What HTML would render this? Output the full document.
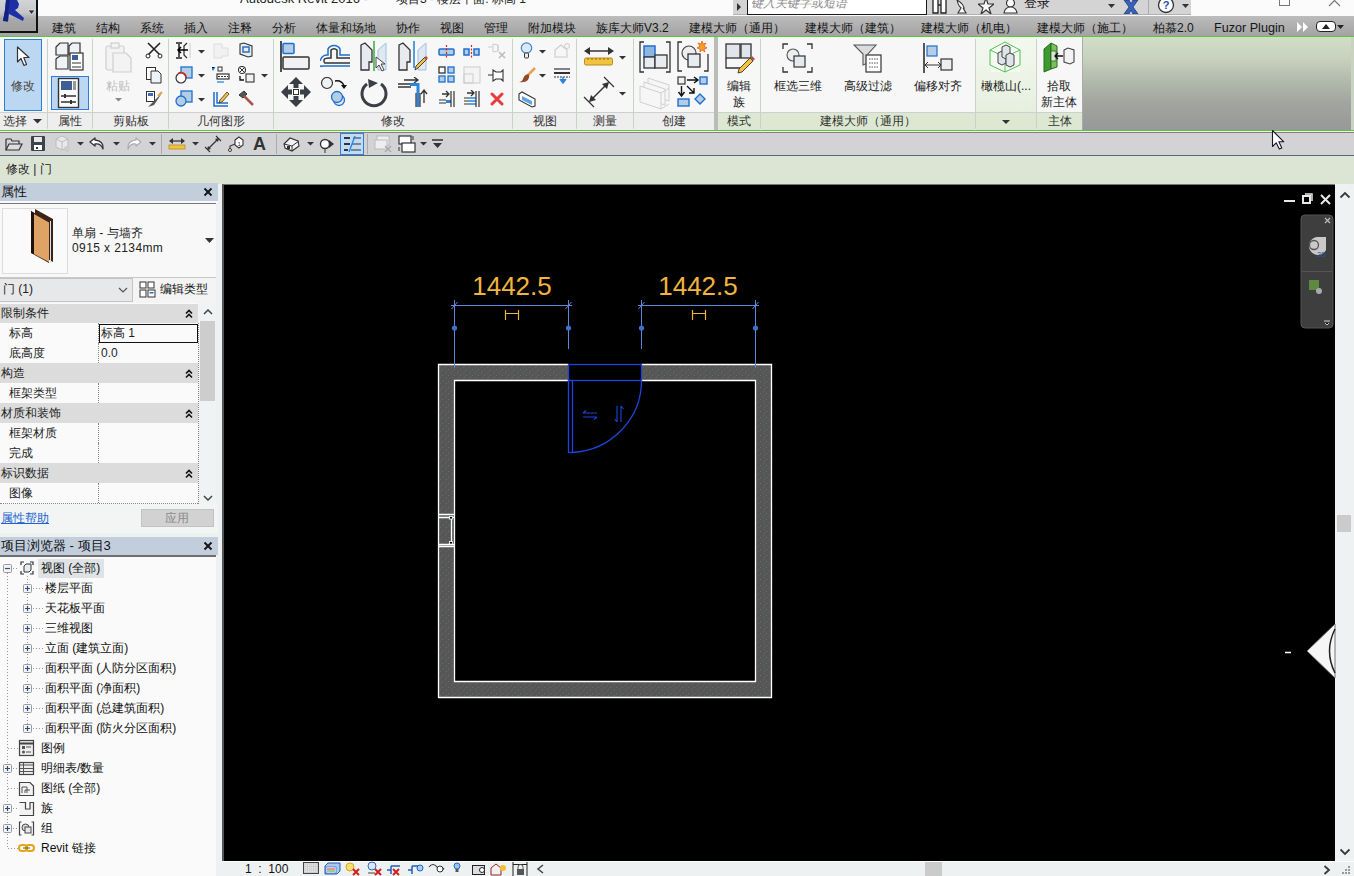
<!DOCTYPE html>
<html><head><meta charset="utf-8">
<style>
*{box-sizing:border-box;margin:0;padding:0}
html,body{width:1354px;height:876px;overflow:hidden;background:#000;font-family:"Liberation Sans",sans-serif;font-size:12px;color:#1e1e1e}
div,span,svg{position:absolute}
.t{white-space:nowrap;line-height:14px;font-size:12px}
#title{left:0;top:0;width:1354px;height:16px;background:#fbfbfb;overflow:hidden}
#tabs{left:0;top:16px;width:1354px;height:20px;background:linear-gradient(#bcbcbc,#a3a3a3)}
#logo{left:0;top:0;width:38px;height:33px;background:linear-gradient(#d2d5d8,#c4c6c8 40%,#a9a9a9 60%,#a2a0a2);border-right:2px solid #111;border-bottom:2px solid #111}
.tab{top:21px;color:#151515}
#greenl{left:0;top:36px;width:1354px;height:1px;background:#58c934}
#ribbon{left:0;top:37px;width:1083px;height:93px;background:#f7f7f7}
#ribbonR{left:1083px;top:37px;width:271px;height:93px;background:linear-gradient(#d2ddc8 0%,#c8d3bf 22%,#b4bcad 45%,#a2a5a0 70%,#979898 100%);border-right:3px solid #c9d3c2}
.sep{top:39px;width:1px;height:90px;background:#c9d2c6}
.plab{top:112px;height:18px;background:#eeeeee;color:#333;text-align:center;line-height:17px;border-top:1px solid #cfcfcf}
.glab{background:#dde8d2}
#greenl2{left:0;top:130px;width:1354px;height:1px;background:#58c934}
#qat{left:0;top:131px;width:1354px;height:25px;background:#d3d3d6;border-top:1px solid #f2f2f2;border-bottom:1px solid #5c6673;box-shadow:inset 0 1px 0 #8a7a8a}
#opt{left:0;top:156px;width:1354px;height:28px;background:#dce5d3}
#canvas{left:222px;top:184px;width:1113px;height:677px;background:#000;border-left:2px solid #555;border-top:1px solid #777}
#props{left:0;top:184px;width:218px;height:349px;background:#f4f4f4}
#browser{left:0;top:533px;width:216px;height:343px;background:#fafafa}
#lsplit{left:216px;top:184px;width:6px;height:692px;background:#eef1f2}
#vscroll{left:1335px;top:184px;width:19px;height:677px;background:#eef2f2}
#status{left:222px;top:861px;width:1132px;height:15px;background:#eef1f1;border-top:1px solid #fff}
.hdr{left:0;height:18px;background:#c3cedd;width:218px}
.sec{left:0;width:198px;height:20px;background:#dcdcdc}
.row{left:0;width:198px;height:21px;background:#fafafa;border-bottom:1px dotted #888}
.dv{left:98px;top:0;width:1px;height:20px;border-left:1px dotted #888}
.chev{font-size:11px;color:#222}
.bi{left:0;color:#111}
</style></head><body>
<div id="title">
  <div class="t" style="left:240px;top:-8px;font-size:13px;color:#222">Autodesk Revit 2016 -</div><div class="t" style="left:396px;top:-8px;font-size:12px;color:#222">项目3 - 楼层平面: 标高 1</div>
</div>
<!--TB--><div style="left:733px;top:0;width:458px;height:15px;background:#d4d4d4;border-bottom:1px solid #b0b0b0"></div>
<svg style="left:735px;top:2px" width="8" height="10" viewBox="0 0 8 10"><path d="M2 1 L6 5 L2 9Z" fill="#333"/></svg>
<div style="left:747px;top:-2px;width:180px;height:17px;background:#fff;border:1px solid #1a1a1a"></div>
<div class="t" style="left:751px;top:-4px;color:#8a8a8a;font-style:italic">键入关键字或短语</div>
<svg style="left:931px;top:0" width="17" height="14" viewBox="0 0 17 14"><path d="M2 0 V13 H7 V0 M10 0 V13 H15 V0 M7 5 H10" stroke="#222" fill="#fff" stroke-width="1.3"/></svg>
<svg style="left:955px;top:0" width="14" height="14" viewBox="0 0 14 14"><path d="M2 0 Q9 4 9 9 Q4 9 2 0Z" fill="#fff" stroke="#333" stroke-width="1.1"/><path d="M6 8 L3 13 H11 L8 8" fill="#fff" stroke="#333" stroke-width="1.1"/></svg>
<svg style="left:978px;top:0" width="16" height="14" viewBox="0 0 16 14"><path d="M8 -2 L10 4 L16 4 L11 8 L13 14 L8 10 L3 14 L5 8 L0 4 L6 4Z" fill="#fff" stroke="#333" stroke-width="1.2"/></svg>
<svg style="left:1003px;top:0" width="15" height="14" viewBox="0 0 15 14"><circle cx="7.5" cy="3" r="4" fill="#fff" stroke="#333" stroke-width="1.2"/><path d="M1 13 Q2 7 7.5 7 Q13 7 14 13Z" fill="#fff" stroke="#333" stroke-width="1.2"/></svg>
<div class="t" style="left:1024px;top:-4px;font-size:13px;color:#111">登录</div>
<svg style="left:1108px;top:4px" width="7" height="5" viewBox="0 0 7 5"><path d="M0 0 H7 L3.5 4Z" fill="#333"/></svg>
<svg style="left:1123px;top:0" width="16" height="14" viewBox="0 0 16 14"><path d="M1 0 H6 L8 4 L10 0 H15 L10 7 L15 14 H10 L8 10 L6 14 H1 L6 7Z" fill="#3a62b8" stroke="#1c3a80" stroke-width="0.8"/></svg>
<div style="left:1148px;top:0;width:1px;height:14px;background:#aaa"></div>
<svg style="left:1157px;top:-3px" width="18" height="17" viewBox="0 0 18 17"><circle cx="9" cy="8" r="7.5" fill="#fff" stroke="#333" stroke-width="1.3"/><text x="9" y="12" font-family="Liberation Sans" font-weight="bold" font-size="11" fill="#1a50b0" text-anchor="middle">?</text></svg>
<svg style="left:1182px;top:4px" width="7" height="5" viewBox="0 0 7 5"><path d="M0 0 H7 L3.5 4Z" fill="#333"/></svg>
<div style="left:1279px;top:-2px;width:11px;height:8px;border:1px solid #777"></div>
<svg style="left:1328px;top:0" width="14" height="8" viewBox="0 0 14 8"><path d="M1 -5 L12 6 M12 -5 L1 6" stroke="#777" stroke-width="1.2"/></svg>
<!--/TB-->
<div id="tabs"></div>
<div id="logo"></div>
<svg style="left:0;top:0" width="37" height="32" viewBox="0 0 37 32"><path d="M6 0 H17 L19 4 L18 8 L15 10 L24 18 L23 21 L9 14 L8 21.5 L3 21 L5 10Z" fill="#1d30a6"/><path d="M6 0 H10 L8 14 L8 21.5 L3 21 L5 10Z" fill="#152380"/><path d="M28 10 H35 L31.5 14.5Z" fill="#2a2e34" stroke="#fff" stroke-width="0.6"/></svg>
<div class="t tab" style="left:52px">建筑</div>
<div class="t tab" style="left:96px">结构</div>
<div class="t tab" style="left:140px">系统</div>
<div class="t tab" style="left:184px">插入</div>
<div class="t tab" style="left:228px">注释</div>
<div class="t tab" style="left:272px">分析</div>
<div class="t tab" style="left:316px">体量和场地</div>
<div class="t tab" style="left:396px">协作</div>
<div class="t tab" style="left:440px">视图</div>
<div class="t tab" style="left:484px">管理</div>
<div class="t tab" style="left:528px">附加模块</div>
<div class="t tab" style="left:596px">族库大师V3.2</div>
<div class="t tab" style="left:689px">建模大师（通用）</div>
<div class="t tab" style="left:805px">建模大师（建筑）</div>
<div class="t tab" style="left:921px">建模大师（机电）</div>
<div class="t tab" style="left:1037px">建模大师（施工）</div>
<div class="t tab" style="left:1153px">柏慕2.0</div>
<div class="t tab" style="left:1214px;font-size:12.6px">Fuzor Plugin</div>
<!--TABSX--><svg style="left:1297px;top:22px" width="12" height="10" viewBox="0 0 12 10"><path d="M0 0 L5 5 L0 10Z M6 0 L11 5 L6 10Z" fill="#fff"/></svg>
<div style="left:1316px;top:21px;width:20px;height:11px;border:1.5px solid #222;border-radius:4px;background:#fff"></div>
<svg style="left:1322px;top:24px" width="8" height="5" viewBox="0 0 8 5"><path d="M0 5 L4 0 L8 5Z" fill="#222"/></svg>
<svg style="left:1337px;top:25px" width="7" height="4" viewBox="0 0 7 4"><path d="M0 0 H7 L3.5 4Z" fill="#222"/></svg>
<!--/TABSX-->
<div id="greenl"></div>
<div id="ribbon"></div>
<div id="ribbonR"></div>
<div id="greenl2"></div>
<div id="qat"></div>
<div id="opt"></div>
<div class="t" style="left:6px;top:162px;color:#222">修改 | 门</div>
<div id="props"></div>
<div id="browser"></div>
<div id="lsplit"></div>
<div id="canvas"></div>
<div id="vscroll"></div>
<div id="status"></div>
<!--RIBBON--><!-- separators -->
<div class="sep" style="left:47px"></div>
<div class="sep" style="left:92px"></div>
<div class="sep" style="left:168px"></div>
<div class="sep" style="left:273px"></div>
<div class="sep" style="left:512px"></div>
<div class="sep" style="left:576px"></div>
<div class="sep" style="left:633px"></div>
<div style="left:714px;top:37px;width:4px;height:93px;background:#b9bcb8"></div>
<div class="sep" style="left:760px"></div>
<div class="sep" style="left:975px"></div>
<div style="left:976px;top:37px;width:60px;height:93px;background:linear-gradient(#f3f8ef,#e4eedb)"></div>
<div class="sep" style="left:1036px"></div>
<div style="left:1082px;top:37px;width:1px;height:93px;background:#aaa"></div>
<!-- panel labels -->
<div class="t plab" style="left:0;width:47px;text-align:left;padding-left:3px">选择</div><svg style="left:33px;top:119px" width="9" height="5" viewBox="0 0 9 5"><path d="M0 0 H9 L4.5 4.5Z" fill="#333"/></svg>
<div class="t plab" style="left:48px;width:44px">属性</div>
<div class="t plab" style="left:93px;width:75px">剪贴板</div>
<div class="t plab" style="left:169px;width:104px">几何图形</div>
<div class="t plab" style="left:274px;width:238px">修改</div>
<div class="t plab" style="left:513px;width:63px">视图</div>
<div class="t plab" style="left:577px;width:56px">测量</div>
<div class="t plab" style="left:634px;width:80px">创建</div>
<div class="t plab glab" style="left:718px;width:42px">模式</div>
<div class="t plab glab" style="left:761px;width:214px">建模大师（通用）</div>
<div class="t plab glab" style="left:976px;width:60px"></div><svg style="left:1002px;top:120px" width="8" height="5" viewBox="0 0 8 5"><path d="M0 0 H8 L4 4Z" fill="#333"/></svg>
<div class="t plab glab" style="left:1037px;width:45px">主体</div>
<!-- 选择: modify button -->
<div style="left:4px;top:39px;width:38px;height:72px;background:#bcd7f1;border:1px solid #2d7fd8"></div>
<svg style="left:16px;top:46px" width="16" height="22" viewBox="0 0 16 22"><path d="M1.5 1 L1.5 16 L5 12.5 L8 19.5 L10.5 18.5 L7.8 11.5 L13 11.5 Z" fill="#fff" stroke="#333" stroke-width="1.2" stroke-linejoin="round"/></svg>
<div class="t" style="left:11px;top:79px;color:#444">修改</div>
<!-- 属性 -->
<svg style="left:54px;top:41px" width="32" height="32" viewBox="0 0 32 32"><g fill="#eef2f5" stroke="#333" stroke-width="1.2"><path d="M3 5 L6 2 L14 2 L14 14 L2 14 L2 6Z"/><path d="M15 5 L18 2 L26 2 L26 14 L15 14Z"/><path d="M3 17 L6 15 L14 15 L14 28 L2 28 L2 18Z"/></g><rect x="16" y="12" width="13" height="17" fill="#fff" stroke="#333" stroke-width="1.2"/><rect x="18" y="14" width="6" height="5" fill="#3b5f9a"/><path d="M18 22 H27 M18 26 H27" stroke="#333"/></svg>
<div style="left:51px;top:76px;width:38px;height:34px;background:#bcd7f1;border:1px solid #2d7fd8"></div>
<svg style="left:57px;top:77px" width="24" height="32" viewBox="0 0 24 32"><rect x="1.5" y="1.5" width="20" height="29" fill="#fafafa" stroke="#333" stroke-width="1.4"/><rect x="4" y="4" width="11" height="9" fill="#3c5f96"/><rect x="16" y="4" width="3" height="9" fill="#999"/><path d="M4 19 H19 M4 25 H19" stroke="#333" stroke-width="1.3"/><path d="M8 17 V21 M14 23 V27" stroke="#333" stroke-width="2"/></svg>
<!-- 剪贴板 -->
<svg style="left:104px;top:42px" width="30" height="32" viewBox="0 0 30 32"><g fill="#f3f3f3" stroke="#cfcfcf" stroke-width="1.2"><rect x="2" y="4" width="18" height="24" rx="2"/><rect x="7" y="1" width="8" height="5"/><path d="M9 11 H22 L27 16 V30 H9Z"/></g></svg>
<div class="t" style="left:106px;top:79px;color:#bdbdbd">粘贴</div>
<svg style="left:115px;top:98px" width="7" height="4" viewBox="0 0 7 4"><path d="M0 0 H7 L3.5 3.5Z" fill="#888"/></svg>
<svg style="left:145px;top:41px" width="18" height="18" viewBox="0 0 18 18"><path d="M3 2 L15 14 M15 2 L3 14" stroke="#222" stroke-width="1.6"/><circle cx="3" cy="15" r="2" fill="#fff" stroke="#222"/><circle cx="15" cy="15" r="2" fill="#fff" stroke="#222"/></svg>
<svg style="left:145px;top:66px" width="18" height="18" viewBox="0 0 18 18"><rect x="1.5" y="1.5" width="9" height="12" fill="#fff" stroke="#333"/><path d="M6 5 H13 L16 8 V17 H6Z" fill="#eef3f7" stroke="#333"/></svg>
<svg style="left:145px;top:90px" width="18" height="18" viewBox="0 0 18 18"><rect x="1.5" y="1.5" width="8" height="10" fill="#fff" stroke="#333"/><rect x="3" y="3" width="5" height="3" fill="#3b6ac4"/><path d="M17 3 L8 12 L3 17 L9 15Z" fill="#555"/><path d="M17 2 L13 6" stroke="#e4a050" stroke-width="2"/></svg>
<!-- 几何图形 -->
<svg style="left:175px;top:42px" width="20" height="18" viewBox="0 0 20 18"><path d="M1 1 H7 M1 16 H7 M4 1 V16" stroke="#555" stroke-width="2"/><path d="M12 1 L9 4 V13 L12 16" stroke="#333" fill="none" stroke-width="1.3"/><path d="M15 1 V16" stroke="#ccc"/><path d="M13 8 H3 M6 5 L3 8 L6 11" stroke="#000" fill="none" stroke-width="1.5"/></svg>
<svg style="left:198px;top:50px" width="7" height="4" viewBox="0 0 7 4"><path d="M0 0 H7 L3.5 3.5Z" fill="#333"/></svg>
<svg style="left:212px;top:43px" width="18" height="16" viewBox="0 0 18 16"><path d="M2 1 H10 L10 5 H16 V13 H10 V15 H2Z" fill="#f1f1f1" stroke="#ddd"/></svg>
<svg style="left:238px;top:42px" width="16" height="16" viewBox="0 0 16 16"><path d="M2 2 L6 1 L14 4 V14 L10 15 L2 12Z" fill="#e8ecef" stroke="#333" stroke-width="1.1"/><rect x="5" y="5" width="6" height="5" fill="none" stroke="#2a6fc9" stroke-width="1.5"/></svg>
<svg style="left:175px;top:66px" width="18" height="18" viewBox="0 0 18 18"><rect x="6" y="1" width="11" height="11" fill="#b5cde4" stroke="#1e6fd0" stroke-width="1.3"/><circle cx="6" cy="12" r="5" fill="#fff" stroke="#333" stroke-width="1.2"/><path d="M3 7.5 A5 5 0 0 1 11 12" stroke="#e02020" fill="none" stroke-width="1.3"/></svg>
<svg style="left:198px;top:74px" width="7" height="4" viewBox="0 0 7 4"><path d="M0 0 H7 L3.5 3.5Z" fill="#333"/></svg>
<svg style="left:212px;top:66px" width="18" height="18" viewBox="0 0 18 18"><path d="M1 5 V2 M3 1 L1 4 L-1 1" stroke="#2a85e0" stroke-width="1.2"/><rect x="6" y="1" width="4" height="4" fill="none" stroke="#333"/><rect x="5" y="8" width="12" height="5" fill="#fff" stroke="#333" stroke-width="1.2"/><path d="M6 10.5 H16" stroke="#333" stroke-dasharray="2 1"/><path d="M5 16 H12" stroke="#2a85e0" stroke-width="1.3"/></svg>
<svg style="left:237px;top:66px" width="20" height="18" viewBox="0 0 20 18"><circle cx="5" cy="4" r="3.5" fill="#fff" stroke="#333" stroke-width="1.1"/><path d="M3 2 L7 6 M7 2 L3 6" stroke="#333"/><path d="M3 10 V14 H7" stroke="#111" fill="none" stroke-width="1.3"/><rect x="9" y="8" width="8" height="8" fill="#eef2f5" stroke="#333" stroke-width="1.1"/></svg>
<svg style="left:261px;top:74px" width="7" height="4" viewBox="0 0 7 4"><path d="M0 0 H7 L3.5 3.5Z" fill="#333"/></svg>
<svg style="left:175px;top:90px" width="18" height="18" viewBox="0 0 18 18"><rect x="6" y="1" width="11" height="11" fill="#b5cde4" stroke="#1e6fd0" stroke-width="1.3"/><circle cx="6" cy="11" r="5" fill="#b5cde4" stroke="#1e6fd0" stroke-width="1.3"/></svg>
<svg style="left:198px;top:98px" width="7" height="4" viewBox="0 0 7 4"><path d="M0 0 H7 L3.5 3.5Z" fill="#333"/></svg>
<svg style="left:212px;top:90px" width="18" height="18" viewBox="0 0 18 18"><path d="M2 2 V16 H16 M5 2 V13 H16" stroke="#1e6fd0" fill="none" stroke-width="1.5"/><path d="M8 10 L15 2 L17 4 L10 12 L7 13Z" fill="#f5c23b" stroke="#333" stroke-width="0.8"/></svg>
<svg style="left:237px;top:90px" width="18" height="18" viewBox="0 0 18 18"><path d="M2 5 L7 1 L10 4 L6 8Z" fill="#555" stroke="#333"/><path d="M7 6 L16 15" stroke="#a8574a" stroke-width="2.5"/></svg>
<!-- 修改 panel -->
<svg style="left:280px;top:40px" width="32" height="33" viewBox="0 0 32 33"><path d="M1 1 V32" stroke="#222" stroke-width="1.6"/><rect x="3" y="3.5" width="11" height="10" rx="1" fill="#b5cde4" stroke="#1e6fd0" stroke-width="1.5"/><rect x="3" y="17" width="26" height="12" rx="1" fill="#f1f1f3" stroke="#333" stroke-width="1.5"/></svg>
<svg style="left:320px;top:43px" width="31" height="26" viewBox="0 0 31 26"><path d="M30 23 H3 A3 3 0 0 1 0.5 17 A7 7 0 0 1 8 12 V6 A7 7 0 0 1 20 6 V12 H30" stroke="#1e6fd0" fill="none" stroke-width="1.5"/><path d="M30 20 H5 Q4 20 4 17 Q4 15 10 15 H11 V7 A4 4 0 0 1 17 7 V15 H30" stroke="#333" fill="none" stroke-width="1.5"/></svg>
<svg style="left:359px;top:40px" width="30" height="32" viewBox="0 0 30 32"><path d="M2 5 L6 3 L13 10 V22 H10 V30 H2Z" fill="#e7eaee" stroke="#333" stroke-width="1.3"/><path d="M15 1 V31" stroke="#1fa01f" stroke-width="1.3"/><path d="M27 3 L19 10 V30 H27Z" fill="#dde8f0" stroke="#a0c0e0"/><path d="M17 17 V28 L20 25 L23 31 L25 30 L22 24 L26 24Z" fill="#fff" stroke="#333" stroke-width="0.9"/></svg>
<svg style="left:397px;top:40px" width="32" height="32" viewBox="0 0 32 32"><path d="M2 5 L6 3 L13 10 V22 H10 V30 H2Z" fill="#e7eaee" stroke="#333" stroke-width="1.3"/><path d="M17 1 V28" stroke="#2a85e0" stroke-width="1.6"/><path d="M29 3 L21 10 V30 H29Z" fill="#dde8f0" stroke="#a0c0e0"/><path d="M18 30 L19 26 L28 17 L30 19 L21 28Z" fill="#f5c23b" stroke="#333" stroke-width="0.9"/><path d="M27 18 L29 16 L31 18 L29 20Z" fill="#a8574a"/></svg>
<svg style="left:280px;top:76px" width="32" height="32" viewBox="0 0 32 32"><path d="M16 1 L23 8 H18.5 V12 H13.5 V8 H9Z M16 31 L23 24 H18.5 V20 H13.5 V24 H9Z M1 16 L8 9 V13.5 H12 V18.5 H8 V23Z M31 16 L24 9 V13.5 H20 V18.5 H24 V23Z" fill="#3a3f45"/><rect x="13.5" y="13.5" width="5" height="5" fill="#fff" stroke="#333"/></svg>
<svg style="left:320px;top:77px" width="30" height="30" viewBox="0 0 30 30"><circle cx="7" cy="6" r="5.5" fill="#eef2f5" stroke="#333" stroke-width="1.2"/><path d="M15 4 Q22 3 24 9" stroke="#111" fill="none" stroke-width="1.5"/><path d="M21 8 L24 12 L27 8Z" fill="#111"/><circle cx="19" cy="23" r="5.5" fill="#dde8f2" stroke="#1e6fd0" stroke-width="1.3"/><circle cx="17" cy="20" r="5.5" fill="#b5cde4" stroke="#1e6fd0" stroke-width="1.3"/></svg>
<svg style="left:359px;top:77px" width="30" height="32" viewBox="0 0 30 32"><path d="M22 7 A12 12 0 1 1 8 7" stroke="#3a3f45" fill="none" stroke-width="3"/><path d="M9 2 L19 6 L10 11Z" fill="#3a3f45"/></svg>
<svg style="left:397px;top:77px" width="32" height="31" viewBox="0 0 32 31"><path d="M7 3 H20 M17 0 L21 3 L17 6" stroke="#333" fill="none" stroke-width="1.3"/><path d="M1 7 H14 M1 10 H14" stroke="#333" stroke-width="1.3"/><path d="M13 7.5 H21 V30" stroke="#2a85e0" fill="none" stroke-width="3"/><path d="M19 16 V30 M23 16 V30" stroke="#333" stroke-width="1.2"/><path d="M27 26 V14 M24 17 L27 13 L30 17" stroke="#333" fill="none" stroke-width="1.3"/></svg>
<svg style="left:438px;top:45px" width="18" height="14" viewBox="0 0 18 14"><rect x="1" y="4" width="15" height="6" rx="1" fill="#b5cde4" stroke="#1e6fd0" stroke-width="1.5"/><path d="M8.5 0 V14" stroke="#e02020" stroke-dasharray="2 1.5" stroke-width="1.2"/></svg>
<svg style="left:463px;top:45px" width="18" height="14" viewBox="0 0 18 14"><rect x="1" y="4" width="5" height="6" fill="#b5cde4" stroke="#1e6fd0" stroke-width="1.5"/><rect x="11" y="4" width="5" height="6" fill="#b5cde4" stroke="#1e6fd0" stroke-width="1.5"/><path d="M8.5 0 V14" stroke="#e02020" stroke-dasharray="2 1.5" stroke-width="1.2"/></svg>
<svg style="left:488px;top:42px" width="18" height="18" viewBox="0 0 18 18"><path d="M0 5 H4 M5 2 L10 3 V9 L5 10Z M10 3 V9" stroke="#ccc" fill="none"/><path d="M11 10 L17 16 M17 10 L11 16" stroke="#bbb" stroke-width="1.5"/></svg>
<svg style="left:438px;top:66px" width="18" height="18" viewBox="0 0 18 18"><rect x="1" y="1" width="6" height="6" fill="#fff" stroke="#333" stroke-width="1.3"/><rect x="10" y="1" width="6" height="6" fill="#b5cde4" stroke="#1e6fd0" stroke-width="1.3"/><rect x="1" y="10" width="6" height="6" fill="#b5cde4" stroke="#1e6fd0" stroke-width="1.3"/><rect x="10" y="10" width="6" height="6" fill="#b5cde4" stroke="#1e6fd0" stroke-width="1.3"/></svg>
<svg style="left:463px;top:66px" width="18" height="18" viewBox="0 0 18 18"><rect x="1" y="1" width="16" height="16" fill="#f4f4f4" stroke="#ccc"/><rect x="1" y="8" width="9" height="9" fill="none" stroke="#ccc"/></svg>
<svg style="left:488px;top:69px" width="16" height="13" viewBox="0 0 16 13"><path d="M0 6 H5 M5 1 L8 3 H13 L15 1 V12 L13 10 H8 L5 12Z" stroke="#333" fill="#fff" stroke-width="1.1"/></svg>
<svg style="left:438px;top:90px" width="18" height="18" viewBox="0 0 18 18"><path d="M4 4 H10 M8 1 L11 4 L8 7" stroke="#333" fill="none" stroke-width="1.3"/><path d="M1 10 H8 M1 13 H8" stroke="#333" stroke-width="1.2"/><path d="M8 11.5 H13" stroke="#2a85e0" stroke-width="3"/><path d="M13 1 V17 M16 1 V17" stroke="#333" stroke-width="1.2"/></svg>
<svg style="left:463px;top:90px" width="18" height="18" viewBox="0 0 18 18"><path d="M4 3 H10 M8 0 L11 3 L8 6" stroke="#333" fill="none" stroke-width="1.3"/><path d="M1 8 H6 M1 11 H6 M1 14 H6" stroke="#333" stroke-width="1.2"/><path d="M6 8 H13 M6 11 H13 M6 14 H13" stroke="#2a85e0" stroke-width="1.5"/><path d="M13 1 V17 M16 1 V17" stroke="#333" stroke-width="1.2"/></svg>
<svg style="left:490px;top:92px" width="14" height="14" viewBox="0 0 14 14"><path d="M2 2 L12 12 M12 2 L2 12" stroke="#e83a3a" stroke-width="3" stroke-linecap="round"/></svg>
<!-- 视图 -->
<svg style="left:520px;top:42px" width="14" height="18" viewBox="0 0 14 18"><circle cx="6.5" cy="6" r="5.2" fill="#dbe9f6" stroke="#3a85d8" stroke-width="1.2"/><rect x="4.5" y="11" width="4" height="5" rx="1" fill="#eee" stroke="#333"/></svg>
<svg style="left:539px;top:50px" width="7" height="4" viewBox="0 0 7 4"><path d="M0 0 H7 L3.5 3.5Z" fill="#333"/></svg>
<svg style="left:553px;top:42px" width="18" height="17" viewBox="0 0 18 17"><path d="M2 8 L8 3 L14 8 V15 H2Z" fill="none" stroke="#ccc" stroke-width="1.1"/><circle cx="14" cy="4" r="2.5" fill="none" stroke="#ccc"/></svg>
<svg style="left:519px;top:67px" width="17" height="16" viewBox="0 0 17 16"><path d="M16 1 L9 8" stroke="#e8a050" stroke-width="2.5"/><path d="M9 7 Q5 8 4 12 Q3 15 0 15 Q6 16 9 13 Q11 10 10 8Z" fill="#8e4b28"/></svg>
<svg style="left:539px;top:74px" width="7" height="4" viewBox="0 0 7 4"><path d="M0 0 H7 L3.5 3.5Z" fill="#333"/></svg>
<svg style="left:553px;top:67px" width="18" height="17" viewBox="0 0 18 17"><path d="M1 2 H17" stroke="#333" stroke-width="1.2"/><path d="M1 6 H17" stroke="#333" stroke-width="2"/><path d="M1 10 H17" stroke="#333" stroke-dasharray="2 1"/><path d="M10 10 V13 M7 12 L10 16 L13 12" stroke="#2a85e0" fill="#2a85e0" stroke-width="1.5"/></svg>
<svg style="left:518px;top:90px" width="18" height="18" viewBox="0 0 18 18"><path d="M1 4 L4 2 L17 9 V16 L14 17 L1 10Z" fill="#fff" stroke="#333" stroke-width="1.1"/><path d="M4 6 L14 11 V15 L4 10Z" fill="#5ea3e8"/></svg>
<!-- 测量 -->
<svg style="left:583px;top:46px" width="32" height="22" viewBox="0 0 32 22"><path d="M3 5 H29" stroke="#333" stroke-width="1.5"/><path d="M1 5 L7 1 V9Z M31 5 L25 1 V9Z" fill="#333"/><rect x="1.5" y="12" width="28" height="7" rx="1.5" fill="#f2c43d" stroke="#b88a20"/><path d="M5 12 V14 M9 12 V14 M13 12 V14 M17 12 V14 M21 12 V14 M25 12 V14" stroke="#8a6a10"/></svg>
<svg style="left:619px;top:56px" width="7" height="4" viewBox="0 0 7 4"><path d="M0 0 H7 L3.5 3.5Z" fill="#333"/></svg>
<svg style="left:583px;top:76px" width="32" height="32" viewBox="0 0 32 32"><path d="M1 21 L11 31 M21 1 L31 11" stroke="#333" stroke-width="1.2"/><path d="M7 25 L25 7" stroke="#333" stroke-width="1.4"/><path d="M6 26 L8 19 L13 24Z M26 6 L24 13 L19 8Z" fill="#333"/></svg>
<svg style="left:619px;top:92px" width="7" height="4" viewBox="0 0 7 4"><path d="M0 0 H7 L3.5 3.5Z" fill="#333"/></svg>
<!-- 创建 -->
<svg style="left:639px;top:41px" width="32" height="32" viewBox="0 0 32 32"><path d="M5 1 H1 V31 H5 M27 1 H31 V31 H27" stroke="#333" fill="none" stroke-width="1.3"/><rect x="5" y="5" width="11" height="11" fill="#8fb6dc" stroke="#1e6fd0" stroke-width="1.5"/><rect x="5" y="16" width="11" height="11" fill="#e6ecf0" stroke="#333" stroke-width="1.3"/><rect x="16" y="14" width="12" height="13" fill="#e6ecf0" stroke="#333" stroke-width="1.3"/></svg>
<svg style="left:677px;top:40px" width="32" height="32" viewBox="0 0 32 32"><path d="M5 2 H1 V31 H5 M27 31 H31 V14" stroke="#333" fill="none" stroke-width="1.3"/><circle cx="12" cy="13" r="7" fill="#eee" stroke="#444" stroke-width="1.2"/><rect x="11" y="14" width="12" height="13" fill="#e6ecf0" stroke="#333" stroke-width="1.3"/><path d="M25 1 L26 4 L29 3 L27 6 L30 8 L27 9 L28 12 L25 10 L23 12 L23 9 L20 8 L23 6 L21 3 L24 4Z" fill="#f1a21c" stroke="#e23a1a" stroke-width="0.6"/></svg>
<svg style="left:638px;top:76px" width="34" height="34" viewBox="0 0 34 34"><g fill="#f6f6f6" stroke="#d0d0d0" stroke-width="1"><path d="M10 2 L31 9 V25 L10 18Z"/><path d="M6 6 L27 13 V29 L6 22Z"/><path d="M2 10 L23 17 V33 L2 26Z"/></g><path d="M23 17 L31 12 M23 33 L31 28" stroke="#d0d0d0"/></svg>
<svg style="left:677px;top:76px" width="32" height="32" viewBox="0 0 32 32"><rect x="1" y="1" width="7" height="7" fill="#eef2f5" stroke="#333" stroke-width="1.2"/><rect x="23" y="1" width="7" height="7" fill="#b5cde4" stroke="#1e6fd0" stroke-width="1.4"/><path d="M10 4 H20 M17 1 L21 4 L17 7" stroke="#111" fill="none" stroke-width="1.4"/><path d="M4.5 10 V19 M1.5 16 L4.5 20 L7.5 16" stroke="#111" fill="none" stroke-width="1.4"/><path d="M10 10 L17 17 M12 17 H17 V12" stroke="#111" fill="none" stroke-width="1.4"/><rect x="1" y="23" width="11" height="7" fill="#b5cde4" stroke="#1e6fd0" stroke-width="1.4"/><path d="M23 18 L28 23 L23 28 L18 23Z" fill="#b5cde4" stroke="#1e6fd0" stroke-width="1.4"/></svg>
<!-- 模式 -->
<svg style="left:724px;top:42px" width="32" height="32" viewBox="0 0 32 32"><rect x="2" y="2" width="14" height="14" fill="#dfe5ea" stroke="#333" stroke-width="1.3"/><rect x="17" y="2" width="10" height="14" fill="#dfe5ea" stroke="#333" stroke-width="1.3"/><path d="M2 16 V26 H16" stroke="#333" fill="none" stroke-width="1.3"/><path d="M14 31 L15 27 L26 16 L29 19 L18 30Z" fill="#f5c23b" stroke="#333" stroke-width="0.9"/><path d="M26 16 L28 14 L31 17 L29 19Z" fill="#a8574a"/></svg>
<div class="t" style="left:727px;top:79px;color:#222">编辑</div>
<div class="t" style="left:733px;top:95px;color:#222">族</div>
<!-- 建模大师 -->
<svg style="left:782px;top:43px" width="31" height="30" viewBox="0 0 31 30"><path d="M1 6 V1 H6 M25 1 H30 V6 M1 24 V29 H6 M25 29 H30 V24" stroke="#333" fill="none" stroke-width="1.3"/><circle cx="11" cy="12" r="6" fill="#eee" stroke="#555" stroke-width="1.1"/><rect x="12" y="13" width="11" height="11" fill="#e4eaee" stroke="#333" stroke-width="1.2"/></svg>
<div class="t" style="left:774px;top:79px;color:#222">框选三维</div>
<svg style="left:853px;top:43px" width="31" height="30" viewBox="0 0 31 30"><path d="M1 2 H23 L15 11 V20 L10 22 V11Z" fill="#d9dde0" stroke="#555" stroke-width="1.1"/><rect x="13" y="12" width="15" height="17" fill="#fff" stroke="#333" stroke-width="1.2"/><path d="M16 16 H25 M16 20 H25 M16 24 H25" stroke="#555" stroke-dasharray="1.5 1"/></svg>
<div class="t" style="left:844px;top:79px;color:#222">高级过滤</div>
<svg style="left:923px;top:42px" width="32" height="32" viewBox="0 0 32 32"><path d="M1 1 V31" stroke="#222" stroke-width="1.5"/><rect x="4" y="4" width="10" height="10" fill="#b5cde4" stroke="#1e6fd0" stroke-width="1.2"/><path d="M3 23 H17 M5 20 L2 23 L5 26 M15 20 L18 23 L15 26" stroke="#333" fill="none"/><rect x="18" y="17" width="11" height="11" fill="#eceff2" stroke="#333" stroke-width="1.2"/></svg>
<div class="t" style="left:914px;top:79px;color:#222">偏移对齐</div>
<!-- 橄榄山 -->
<svg style="left:989px;top:41px" width="33" height="32" viewBox="0 0 33 32"><rect x="2" y="2" width="29" height="29" fill="#f5f9f2"/><path d="M16 1 L31 9 V24 L16 31 L1 24 V9Z M1 9 L16 16 L31 9 M16 16 V31" stroke="#3cc03c" fill="none" stroke-width="0.9"/><g fill="#dfe4e8" stroke="#444" stroke-width="1"><path d="M9 12 L13 10 L17 12 V22 L13 24 L9 22Z"/><path d="M13 6 L17 4 L21 6 V16 L17 18 L13 16Z"/><path d="M17 14 L21 12 L25 14 V24 L21 26 L17 24Z"/></g></svg>
<div class="t" style="left:981px;top:79px;color:#222">橄榄山(...</div>
<!-- 主体 -->
<svg style="left:1043px;top:41px" width="33" height="32" viewBox="0 0 33 32"><path d="M1 8 L8 2 V28 L1 31Z" fill="#3c9a2e" stroke="#2a6a20"/><path d="M8 2 L14 5 V26 L8 28Z" fill="#7dbe5e" stroke="#2a6a20"/><rect x="8" y="10" width="5" height="10" fill="#d8e8d0" stroke="#2a6a20" stroke-width="0.8"/><path d="M12 15 H20 M15 12 L12 15 L15 18" stroke="#111" fill="none" stroke-width="1.4"/><path d="M21 9 L25 7 L31 9 V21 L27 23 L21 21Z" fill="#f3f3f3" stroke="#444" stroke-width="1.1"/></svg>
<div class="t" style="left:1047px;top:79px;color:#222">拾取</div>
<div class="t" style="left:1041px;top:95px;color:#222">新主体</div>
<!--/RIBBON-->
<!--QAT--><!-- QAT icons -->
<svg style="left:5px;top:136px" width="18" height="16" viewBox="0 0 18 16"><path d="M1 3 H6 L7 5 H14 V8" stroke="#333" fill="#e4e4e4" stroke-width="1.2"/><path d="M1 14 L4 8 H17 L14 14Z" fill="#ddd" stroke="#333" stroke-width="1.2"/><path d="M1 3 V14" stroke="#333" stroke-width="1.2"/></svg>
<svg style="left:30px;top:135px" width="17" height="17" viewBox="0 0 17 17"><rect x="1" y="1" width="14" height="15" rx="1" fill="#3d434b"/><rect x="4" y="2" width="8" height="5" fill="#e8e8e8"/><rect x="4" y="10" width="8" height="5" fill="#fff"/><rect x="6" y="12" width="2" height="2" fill="#333"/></svg>
<svg style="left:53px;top:135px" width="18" height="18" viewBox="0 0 18 18"><path d="M3 4 L9 1 L15 4 V12 L9 15 L3 12Z" fill="#e9e9e9" stroke="#bbb"/><path d="M3 4 L9 7 L15 4 M9 7 V15" stroke="#bbb" fill="none"/><circle cx="14" cy="14" r="3" fill="#ccc"/></svg>
<svg style="left:77px;top:142px" width="7" height="4" viewBox="0 0 7 4"><path d="M0 0 H7 L3.5 3.5Z" fill="#333"/></svg>
<svg style="left:89px;top:136px" width="17" height="15" viewBox="0 0 17 15"><path d="M6 2 L1 6 L6 10 V8 Q12 7 14 13 Q15 5 6 4Z" fill="#fff" stroke="#333" stroke-width="1.3" stroke-linejoin="round"/></svg>
<svg style="left:113px;top:142px" width="7" height="4" viewBox="0 0 7 4"><path d="M0 0 H7 L3.5 3.5Z" fill="#333"/></svg>
<svg style="left:125px;top:136px" width="17" height="15" viewBox="0 0 17 15"><path d="M11 2 L16 6 L11 10 V8 Q5 7 3 13 Q2 5 11 4Z" fill="#fff" stroke="#aaa" stroke-width="1.2" stroke-linejoin="round"/></svg>
<svg style="left:149px;top:142px" width="7" height="4" viewBox="0 0 7 4"><path d="M0 0 H7 L3.5 3.5Z" fill="#333"/></svg>
<div style="left:161px;top:134px;width:1px;height:20px;background:#aaa"></div>
<svg style="left:168px;top:138px" width="18" height="12" viewBox="0 0 18 12"><path d="M2 3 H16" stroke="#333" stroke-width="1.3"/><path d="M1 3 L5 0 V6Z M17 3 L13 0 V6Z" fill="#333"/><rect x="1" y="7" width="16" height="4" fill="#f2c43d" stroke="#b88a20" stroke-width="0.8"/></svg>
<svg style="left:192px;top:142px" width="7" height="4" viewBox="0 0 7 4"><path d="M0 0 H7 L3.5 3.5Z" fill="#333"/></svg>
<svg style="left:204px;top:135px" width="18" height="18" viewBox="0 0 18 18"><path d="M1 12 L6 17 M12 1 L17 6" stroke="#333" stroke-width="1.1"/><path d="M4 14 L14 4" stroke="#333" stroke-width="1.3"/><path d="M3 15 L4 11 L7 14Z M15 3 L14 7 L11 4Z" fill="#333"/></svg>
<svg style="left:228px;top:136px" width="17" height="16" viewBox="0 0 17 16"><path d="M2 14 V10 L7 8" stroke="#333" fill="none" stroke-width="1.1"/><circle cx="2" cy="14" r="1.5" fill="#fff" stroke="#333"/><path d="M7 4 L11 1 L15 4 V9 L11 12 L7 9Z" fill="#fff" stroke="#333" stroke-width="1.1"/><text x="9.5" y="9.5" font-size="6" fill="#333" font-family="Liberation Sans">1</text></svg>
<div class="t" style="left:253px;top:134px;font-size:18px;font-weight:bold;color:#333;line-height:20px">A</div>
<div style="left:276px;top:134px;width:1px;height:20px;background:#aaa"></div>
<svg style="left:283px;top:136px" width="17" height="16" viewBox="0 0 17 16"><path d="M1 8 L7 2 L15 5 L16 10 L9 15 L2 12Z" fill="#f4f4f4" stroke="#333" stroke-width="1.1"/><path d="M1 8 L9 10 L16 5 M9 10 V15" stroke="#333" fill="none"/><rect x="4" y="10" width="3" height="3" fill="#333"/></svg>
<svg style="left:307px;top:142px" width="7" height="4" viewBox="0 0 7 4"><path d="M0 0 H7 L3.5 3.5Z" fill="#333"/></svg>
<svg style="left:319px;top:136px" width="16" height="17" viewBox="0 0 16 17"><circle cx="6" cy="8" r="4.5" fill="#fff" stroke="#333" stroke-width="1.4"/><path d="M10 4 L15 8 L10 12Z" fill="#333"/><path d="M6 12.5 V17" stroke="#333"/></svg>
<div style="left:340px;top:133px;width:24px;height:22px;background:#c0dbf5;border:1px solid #2d7fd8"></div>
<svg style="left:343px;top:136px" width="19" height="16" viewBox="0 0 19 16"><path d="M1 2 H7 M1 8 H7 M1 14 H5" stroke="#333" stroke-width="2.2"/><path d="M10 2 H18 M9 8 H18 M8 14 H18" stroke="#333" stroke-width="1.1"/><path d="M12 0 L6 16" stroke="#2a85e0" stroke-width="1.4"/></svg>
<div style="left:367px;top:134px;width:1px;height:20px;background:#aaa"></div>
<svg style="left:374px;top:135px" width="18" height="18" viewBox="0 0 18 18"><rect x="3" y="1" width="12" height="9" fill="#eee" stroke="#bbb"/><rect x="1" y="5" width="12" height="9" fill="#eee" stroke="#bbb"/><path d="M11 11 L17 17 M17 11 L11 17" stroke="#aaa" stroke-width="1.5"/></svg>
<svg style="left:398px;top:135px" width="18" height="18" viewBox="0 0 18 18"><rect x="1" y="1" width="12" height="8" fill="#fff" stroke="#333" stroke-width="1.2"/><rect x="4" y="8" width="13" height="9" fill="#fff" stroke="#333" stroke-width="1.2"/><path d="M15 1 V5 M1 12 V16" stroke="#333"/></svg>
<svg style="left:420px;top:142px" width="7" height="4" viewBox="0 0 7 4"><path d="M0 0 H7 L3.5 3.5Z" fill="#333"/></svg>
<svg style="left:432px;top:139px" width="11" height="10" viewBox="0 0 11 10"><path d="M0 1 H11" stroke="#333" stroke-width="1.5"/><path d="M1 4 H10 L5.5 9Z" fill="#333"/></svg>
<!--/QAT-->
<!--PROPS--><div class="hdr" style="top:183px"></div>
<div class="t" style="left:1px;top:184px;font-size:13px;line-height:15px;color:#111">属性</div>
<svg style="left:203px;top:187px" width="10" height="10" viewBox="0 0 10 10"><path d="M1.5 1.5 L8.5 8.5 M8.5 1.5 L1.5 8.5" stroke="#111" stroke-width="1.8"/></svg>
<div style="left:0;top:201px;width:218px;height:2px;background:#fafafa"></div><div style="left:0;top:203px;width:216px;height:1px;background:#777"></div>
<div style="left:0;top:204px;width:216px;height:73px;background:#f8f8f8"></div>
<div style="left:2px;top:208px;width:66px;height:66px;background:#fafafa;border:1px solid #dcdcdc"></div>
<svg style="left:28px;top:206px" width="28" height="60" viewBox="0 0 28 60"><path d="M7 3 L25 13 V56 L7 46Z" fill="#3a2418"/><path d="M22.5 15 V57" stroke="#d8e4ee" stroke-width="1"/><path d="M3 5 L21 15 V57 L3 47Z" fill="#3a2418"/><path d="M6 8 L21 16.5 V56 L6 48Z" fill="#dfa465"/><path d="M3 5 L6 7 V48 L3 47Z" fill="#1e120a"/></svg>
<div class="t" style="left:72px;top:226px;color:#222">单扇 - 与墙齐</div>
<div class="t" style="left:72px;top:241px;color:#222;letter-spacing:0.4px">0915 x 2134mm</div>
<svg style="left:205px;top:238px" width="9" height="6" viewBox="0 0 9 6"><path d="M0 0 H9 L4.5 5Z" fill="#333"/></svg>
<div style="left:0;top:277px;width:216px;height:1px;background:#c8c8c8"></div>
<div style="left:0;top:278px;width:133px;height:24px;background:#e7e8e9;border:1px solid #c4c4c4;border-left:none"></div>
<div class="t" style="left:3px;top:282px;color:#222">门 (1)</div>
<svg style="left:118px;top:287px" width="10" height="6" viewBox="0 0 10 6"><path d="M1 1 L5 5 L9 1" stroke="#555" fill="none" stroke-width="1.2"/></svg>
<svg style="left:139px;top:281px" width="17" height="17" viewBox="0 0 17 17"><rect x="1" y="1" width="6" height="6" fill="#fff" stroke="#333"/><rect x="1" y="9" width="6" height="7" fill="#fff" stroke="#333"/><rect x="9" y="1" width="6" height="6" fill="#fff" stroke="#333"/><rect x="9" y="9" width="7" height="7" fill="#fff" stroke="#333"/><rect x="10.5" y="11" width="4" height="1.5" fill="#2a6ac4"/></svg>
<div class="t" style="left:160px;top:282px;color:#111">编辑类型</div>
<!-- grid -->
<div style="left:0;top:303px;width:198px;height:201px;background:#fafafa"></div>
<div class="sec" style="top:304px"></div><div class="t" style="left:1px;top:306px">限制条件</div>
<svg style="left:185px;top:309px" width="8" height="10" viewBox="0 0 8 10"><path d="M1 4.5 L4 1.5 L7 4.5 M1 8.5 L4 5.5 L7 8.5" stroke="#111" fill="none" stroke-width="1.6"/></svg>
<div class="row" style="top:323px"><div class="dv"></div></div><div class="t" style="left:9px;top:326px">标高</div>
<div style="left:99px;top:324px;width:99px;height:19px;border:1px solid #111;background:#fafafa"></div><div class="t" style="left:101px;top:326px">标高 1</div>
<div class="row" style="top:343px"><div class="dv"></div></div><div class="t" style="left:9px;top:346px">底高度</div><div class="t" style="left:101px;top:346px">0.0</div>
<div class="sec" style="top:363px"></div><div class="t" style="left:1px;top:366px">构造</div>
<svg style="left:185px;top:369px" width="8" height="10" viewBox="0 0 8 10"><path d="M1 4.5 L4 1.5 L7 4.5 M1 8.5 L4 5.5 L7 8.5" stroke="#111" fill="none" stroke-width="1.6"/></svg>
<div class="row" style="top:383px"><div class="dv"></div></div><div class="t" style="left:9px;top:386px">框架类型</div>
<div class="sec" style="top:403px"></div><div class="t" style="left:1px;top:406px">材质和装饰</div>
<svg style="left:185px;top:409px" width="8" height="10" viewBox="0 0 8 10"><path d="M1 4.5 L4 1.5 L7 4.5 M1 8.5 L4 5.5 L7 8.5" stroke="#111" fill="none" stroke-width="1.6"/></svg>
<div class="row" style="top:423px"><div class="dv"></div></div><div class="t" style="left:9px;top:426px">框架材质</div>
<div class="row" style="top:443px"><div class="dv"></div></div><div class="t" style="left:9px;top:446px">完成</div>
<div class="sec" style="top:463px"></div><div class="t" style="left:1px;top:466px">标识数据</div>
<svg style="left:185px;top:469px" width="8" height="10" viewBox="0 0 8 10"><path d="M1 4.5 L4 1.5 L7 4.5 M1 8.5 L4 5.5 L7 8.5" stroke="#111" fill="none" stroke-width="1.6"/></svg>
<div class="row" style="top:483px"><div class="dv"></div></div><div class="t" style="left:9px;top:486px">图像</div>
<div style="left:198px;top:323px;width:1px;height:181px;border-left:1px dotted #888"></div>
<!-- scrollbar -->
<div style="left:199px;top:303px;width:17px;height:201px;background:#f0f3f3"></div>
<div style="left:200px;top:321px;width:15px;height:80px;background:#cdcdcd"></div>
<svg style="left:203px;top:309px" width="10" height="6" viewBox="0 0 10 6"><path d="M1 5 L5 1 L9 5" stroke="#444" fill="none" stroke-width="1.5"/></svg>
<svg style="left:203px;top:495px" width="10" height="6" viewBox="0 0 10 6"><path d="M1 1 L5 5 L9 1" stroke="#444" fill="none" stroke-width="1.5"/></svg>
<div style="left:0;top:504px;width:218px;height:29px;background:#f3f4f4"></div>
<div class="t" style="left:1px;top:511px;color:#1a64d0;text-decoration:underline">属性帮助</div>
<div style="left:141px;top:509px;width:73px;height:18px;background:#d2d2d2;border:1px solid #c2c2c2"></div>
<div class="t" style="left:165px;top:511px;color:#8a8a8a">应用</div>
<div style="left:0;top:533px;width:218px;height:4px;background:#eef1f2"></div>
<!-- browser -->
<div class="hdr" style="top:537px"></div>
<div class="t" style="left:1px;top:538px;font-size:13px;line-height:15px;color:#111">项目浏览器 - 项目3</div>
<svg style="left:203px;top:541px" width="10" height="10" viewBox="0 0 10 10"><path d="M1.5 1.5 L8.5 8.5 M8.5 1.5 L1.5 8.5" stroke="#111" stroke-width="1.8"/></svg>
<div style="left:0;top:555px;width:216px;height:2px;background:#6e6e6e"></div>
<!--/PROPS-->
<!--BROWSER--><svg style="left:0;top:557px" width="216" height="300" viewBox="0 557 216 300">
<g stroke="#999" stroke-dasharray="1 2" stroke-width="1">
<path d="M7.5 573 V848 M27.5 576 V728 M13 568.5 H19"/>
<path d="M33 588.5 H43 M33 608.5 H43 M33 628.5 H43 M33 648.5 H43 M33 668.5 H43 M33 688.5 H43 M33 708.5 H43 M33 728.5 H43"/>
<path d="M8 748.5 H19 M13 768.5 H19 M8 788.5 H19 M13 808.5 H19 M13 828.5 H19 M8 848.5 H19"/>
</g>
<g fill="#f4f4f4" stroke="#9a9a9a">
<rect x="3.5" y="564.5" width="8" height="8" rx="1"/>
<rect x="23.5" y="584.5" width="8" height="8" rx="1"/><rect x="23.5" y="604.5" width="8" height="8" rx="1"/><rect x="23.5" y="624.5" width="8" height="8" rx="1"/><rect x="23.5" y="644.5" width="8" height="8" rx="1"/><rect x="23.5" y="664.5" width="8" height="8" rx="1"/><rect x="23.5" y="684.5" width="8" height="8" rx="1"/><rect x="23.5" y="704.5" width="8" height="8" rx="1"/><rect x="23.5" y="724.5" width="8" height="8" rx="1"/>
<rect x="3.5" y="764.5" width="8" height="8" rx="1"/><rect x="3.5" y="804.5" width="8" height="8" rx="1"/><rect x="3.5" y="824.5" width="8" height="8" rx="1"/>
</g>
<g stroke="#2d4a8a" stroke-width="1.2">
<path d="M5 568.5 H10"/>
<path d="M25 588.5 H30 M27.5 586 V591 M25 608.5 H30 M27.5 606 V611 M25 628.5 H30 M27.5 626 V631 M25 648.5 H30 M27.5 646 V651 M25 668.5 H30 M27.5 666 V671 M25 688.5 H30 M27.5 686 V691 M25 708.5 H30 M27.5 706 V711 M25 728.5 H30 M27.5 726 V731"/>
<path d="M5 768.5 H10 M7.5 766 V771 M5 808.5 H10 M7.5 806 V811 M5 828.5 H10 M7.5 826 V831"/>
</g>
<!-- view icon -->
<path d="M21 565 V562 H24 M30 562 H33 V565 M21 571 V574 H24 M30 574 H33 V571" stroke="#333" fill="none" stroke-width="1.2"/>
<path d="M24 566 L26 564 H31 V570 L29 572 H24Z" fill="#e8ecf0" stroke="#333"/>
<!-- legend -->
<rect x="19.5" y="740.5" width="14" height="15" fill="#eee" stroke="#444" stroke-width="1.2"/><path d="M20 743.5 H33" stroke="#444" stroke-width="2"/><rect x="22" y="746" width="3" height="3" fill="#555"/><circle cx="23.5" cy="752" r="1.5" fill="#555"/><path d="M26 747 H31 M26 752 H31" stroke="#555"/>
<!-- schedule -->
<rect x="19.5" y="762.5" width="14" height="12" fill="#eee" stroke="#444" stroke-width="1.2"/><path d="M20 765 H33 M20 768.5 H33 M20 771.5 H33 M23.5 763 V774" stroke="#555"/>
<!-- sheets -->
<path d="M19.5 782.5 H30 L33.5 786 V795.5 H19.5Z" fill="#f2f2f2" stroke="#444" stroke-width="1.2"/><path d="M22 793 V787 H27 V793 M25 793 V790 H30" stroke="#555" fill="none"/>
<!-- families -->
<path d="M19.5 802.5 H25.5 V809 H30 V802.5 H33.5 V815.5 H19.5" fill="#f2f2f2" stroke="#444" stroke-width="1.2"/>
<!-- groups -->
<path d="M21.5 822 H19.5 V835 H21.5 M31.5 822 H33.5 V835 H31.5" stroke="#444" fill="none" stroke-width="1.2"/><circle cx="25.5" cy="827.5" r="3.5" fill="#dde" stroke="#444"/><rect x="25" y="827" width="6" height="6" fill="#e8e8e8" stroke="#444"/>
<!-- link -->
<rect x="19" y="845" width="8" height="6" rx="3" fill="none" stroke="#e3a51a" stroke-width="2"/><rect x="26" y="845" width="8" height="6" rx="3" fill="none" stroke="#e3a51a" stroke-width="2"/><path d="M23 848 H30" stroke="#6a5a10"/>
</svg>
<div style="left:38px;top:559px;width:66px;height:19px;background:#dfe3e5"></div>
<div class="t bi" style="left:41px;top:561px">视图 (全部)</div>
<div class="t bi" style="left:45px;top:581px">楼层平面</div>
<div class="t bi" style="left:45px;top:601px">天花板平面</div>
<div class="t bi" style="left:45px;top:621px">三维视图</div>
<div class="t bi" style="left:45px;top:641px">立面 (建筑立面)</div>
<div class="t bi" style="left:45px;top:661px">面积平面 (人防分区面积)</div>
<div class="t bi" style="left:45px;top:681px">面积平面 (净面积)</div>
<div class="t bi" style="left:45px;top:701px">面积平面 (总建筑面积)</div>
<div class="t bi" style="left:45px;top:721px">面积平面 (防火分区面积)</div>
<div class="t bi" style="left:41px;top:741px">图例</div>
<div class="t bi" style="left:41px;top:761px">明细表/数量</div>
<div class="t bi" style="left:41px;top:781px">图纸 (全部)</div>
<div class="t bi" style="left:41px;top:801px">族</div>
<div class="t bi" style="left:41px;top:821px">组</div>
<div class="t bi" style="left:41px;top:841px">Revit 链接</div>
<!--/BROWSER-->
<!--CANVAS--><svg style="left:0;top:0" width="1354" height="876" viewBox="0 0 1354 876">
<defs>
<pattern id="noise" width="6" height="6" patternUnits="userSpaceOnUse"><rect width="6" height="6" fill="#565656"/><rect x="1" y="1" width="1" height="1" fill="#7a5a5a"/><rect x="4" y="3" width="1" height="1" fill="#5a7a5a"/><rect x="2" y="5" width="1" height="1" fill="#5a6a80"/></pattern>
</defs>
<!-- wall fill -->
<path d="M438.5 364.5 H568.5 V380.5 H454.5 V681.5 H755.5 V380.5 H641.5 V364.5 H771.5 V697.5 H438.5Z" fill="url(#noise)"/>
<!-- wall lines -->
<g stroke="#fff" stroke-width="1.3" fill="none">
<path d="M568.5 364.5 H438.5 V697.5 H771.5 V364.5 H641.5"/>
<path d="M568.5 380.5 H454.5 V681.5 H755.5 V380.5 H641.5"/>
<path d="M439 514.5 H454 M439 517.5 H454 M439 544.5 H454 M439 546.5 H454"/>
<path d="M451.5 518 V543"/>
</g>
<rect x="449.5" y="516.5" width="3" height="2.5" fill="#000" stroke="#fff" stroke-width="0.8"/>
<rect x="449.5" y="541.5" width="3" height="2.5" fill="#000" stroke="#fff" stroke-width="0.8"/>
<!-- door -->
<g stroke="#1d44dc" stroke-width="1.3" fill="none">
<rect x="568.5" y="364.5" width="73" height="16"/>
<rect x="568.5" y="380.5" width="4" height="72"/>
<path d="M641.5 380.5 A73 72 0 0 1 572.5 452.5"/>
<path d="M583 413 H597 M583 413 L586 410.5 M583 417 H597 M597 417 L594 419.5" stroke-width="1.1"/>
<path d="M617 406 V422 M617 422 L614.5 419 M621 422 V406 M621 406 L623.5 409" stroke-width="1.1"/>
</g>
<!-- dimensions -->
<g stroke="#5c86dc" stroke-width="1" fill="none">
<path d="M451 305.5 H572 M638 305.5 H759"/>
<path d="M454.5 300 V368 M568.5 300 V349 M641.5 300 V349 M755.5 300 V368"/>
<path d="M451.5 309 L457.5 302 M565.5 309 L571.5 302 M638.5 309 L644.5 302 M752.5 309 L758.5 302"/>
</g>
<g fill="#3f6fc8"><circle cx="454.5" cy="328" r="2.6"/><circle cx="568.5" cy="328" r="2.6"/><circle cx="641.5" cy="328" r="2.6"/><circle cx="755.5" cy="328" r="2.6"/></g>
<g stroke="#f0b43c" stroke-width="1.2" fill="none">
<path d="M505.5 310 V320 M518.5 310 V320 M505.5 313.5 H518.5"/>
<path d="M692.5 310 V320 M705.5 310 V320 M692.5 313.5 H705.5"/>
</g>
<text x="512" y="295" font-family="Liberation Sans" font-size="26" fill="#f2b43e" text-anchor="middle">1442.5</text>
<text x="698" y="295" font-family="Liberation Sans" font-size="26" fill="#f2b43e" text-anchor="middle">1442.5</text>
<!-- window controls -->
<g stroke="#e8e8e8" stroke-width="2" fill="none">
<path d="M1284 201 H1295"/>
<rect x="1303" y="196" width="7" height="7"/><path d="M1305 194 H1312 V201" stroke-width="1.5"/>
<path d="M1321 195 L1330 204 M1330 195 L1321 204"/>
</g>
<!-- nav bar -->
<rect x="1301" y="215" width="32" height="113" rx="4" fill="#3e3e3e" stroke="#555"/>
<path d="M1325 218 L1330 223 M1330 218 L1325 223" stroke="#bbb" stroke-width="1.2"/>
<path d="M1317 237 A9 9 0 1 0 1326 250 V237Z" fill="#c9c9c9"/>
<circle cx="1314" cy="245" r="4.5" fill="none" stroke="#555" stroke-width="1.3"/>
<text x="1317" y="257" font-family="Liberation Sans" font-size="7" fill="#2a55b0">2D</text>
<path d="M1302 271.5 H1332" stroke="#555"/>
<rect x="1309" y="280" width="10" height="10" fill="#5d8a40"/>
<circle cx="1319" cy="291" r="3" fill="#aaa"/>
<path d="M1324 321 H1330 M1325 323 L1327 325 L1329 323" stroke="#ccc" stroke-width="1"/>
<!-- view cube -->
<path d="M1307 651 L1335 624 V678Z" fill="#f6f6f6" stroke="#666" stroke-width="0.9"/>
<path d="M1335 629 Q1324 651 1335 673" stroke="#222" stroke-width="1.5" fill="none"/>
<path d="M1285 652.5 H1291" stroke="#fff" stroke-width="1.5"/>
</svg>
<!-- scrollbars -->
<svg style="left:1339px;top:191px" width="12" height="8" viewBox="0 0 12 8"><path d="M1.5 6.5 L6 2 L10.5 6.5" stroke="#3a3a3a" fill="none" stroke-width="1.8"/></svg>
<div style="left:1337px;top:515px;width:14px;height:17px;background:#cbcbcb"></div>
<svg style="left:1339px;top:848px" width="12" height="8" viewBox="0 0 12 8"><path d="M1.5 1.5 L6 6 L10.5 1.5" stroke="#3a3a3a" fill="none" stroke-width="1.8"/></svg>
<div style="left:925px;top:862px;width:17px;height:14px;background:#cbcbcb"></div>
<svg style="left:1323px;top:865px" width="8" height="10" viewBox="0 0 8 10"><path d="M1.5 1 L6 5 L1.5 9" stroke="#3a3a3a" fill="none" stroke-width="1.8"/></svg>
<!--/CANVAS-->
<!--STATUS--><div class="t" style="left:245px;top:862px;font-size:12px;color:#111">1&nbsp;&nbsp;:&nbsp;&nbsp;100</div>
<svg style="left:302px;top:861px" width="250" height="15" viewBox="302 861 250 15">
<rect x="303.5" y="862.5" width="15" height="11" fill="#ccc" stroke="#444"/><path d="M304 865 H318 M304 868 H318 M304 871 H318 M306 863 V873 M309 863 V873 M312 863 V873 M315 863 V873" stroke="#fff" stroke-width="0.7" stroke-dasharray="1 1"/>
<path d="M325 866 L328 863 H340 V871 L337 874 H325Z" fill="#a8c8ec" stroke="#1e5fc0"/><rect x="326" y="867" width="10" height="6" fill="#fff" stroke="#1e5fc0" stroke-width="0.6"/><path d="M327 869 H335" stroke="#e02020"/><path d="M327 871 H335" stroke="#20a020"/>
<circle cx="350" cy="867" r="4" fill="#f5e070" stroke="#e0a020"/><path d="M353 869 L359 875 M359 869 L353 875" stroke="#d02020" stroke-width="2"/>
<circle cx="372" cy="866" r="4" fill="#dde8f5" stroke="#2a6ac4"/><path d="M368 873 H375" stroke="#444"/><path d="M375 869 L381 875 M381 869 L375 875" stroke="#d02020" stroke-width="2"/>
<path d="M387 870 H391 M391 866 V874 M391 866 H400" stroke="#1e5fc0" stroke-width="1.5" fill="none"/><path d="M393 869 L399 875 M399 869 L393 875" stroke="#d02020" stroke-width="2"/>
<path d="M408 870 H412 M412 866 V874 M412 866 H418" stroke="#1e5fc0" stroke-width="1.5" fill="none"/><circle cx="420" cy="868" r="3" fill="#a8d0f0" stroke="#1e5fc0"/>
<path d="M429 867 Q433 862 437 867 Q441 874 444 868" stroke="#333" fill="none" stroke-width="1.1"/><circle cx="440" cy="869" r="3" fill="#fff" stroke="#333"/>
<circle cx="457" cy="866" r="3" fill="#9ac4f0" stroke="#2a6ac4"/><rect x="455.5" y="869" width="3" height="3" fill="#555"/>
<rect x="472.5" y="865.5" width="12" height="9" fill="#ddd" stroke="#222"/><circle cx="482" cy="870" r="2.5" fill="#fff" stroke="#222"/>
<path d="M491 868 L496 864 L501 868 V875 H491Z" fill="none" stroke="#a02020"/><circle cx="503" cy="868" r="3" fill="#f5c030"/>
<path d="M513 862 V876 M527 862 V876 M513 864.5 H527" stroke="#222"/><rect x="517" y="869" width="7" height="6" fill="#555"/><path d="M518 869 V867 A2 2 0 0 1 523 867 V869" stroke="#555" fill="none"/>
<path d="M543 865 L538 869 L543 873" stroke="#444" fill="none" stroke-width="1.6"/>
</svg>
<svg style="left:1340px;top:864px" width="12" height="12" viewBox="0 0 12 12"><g fill="#999"><rect x="8" y="2" width="2" height="2"/><rect x="5" y="5" width="2" height="2"/><rect x="8" y="5" width="2" height="2"/><rect x="2" y="8" width="2" height="2"/><rect x="5" y="8" width="2" height="2"/><rect x="8" y="8" width="2" height="2"/></g></svg>
<!--/STATUS-->
<svg style="left:1271px;top:129px" width="15" height="22" viewBox="0 0 15 22"><path d="M1.5 1.5 V17.5 L5.2 13.8 L8.3 20 L10.8 19 L7.9 12.8 L12.8 12.8Z" fill="#fff" stroke="#141a2a" stroke-width="1.1" stroke-linejoin="round"/></svg>
</body></html>
